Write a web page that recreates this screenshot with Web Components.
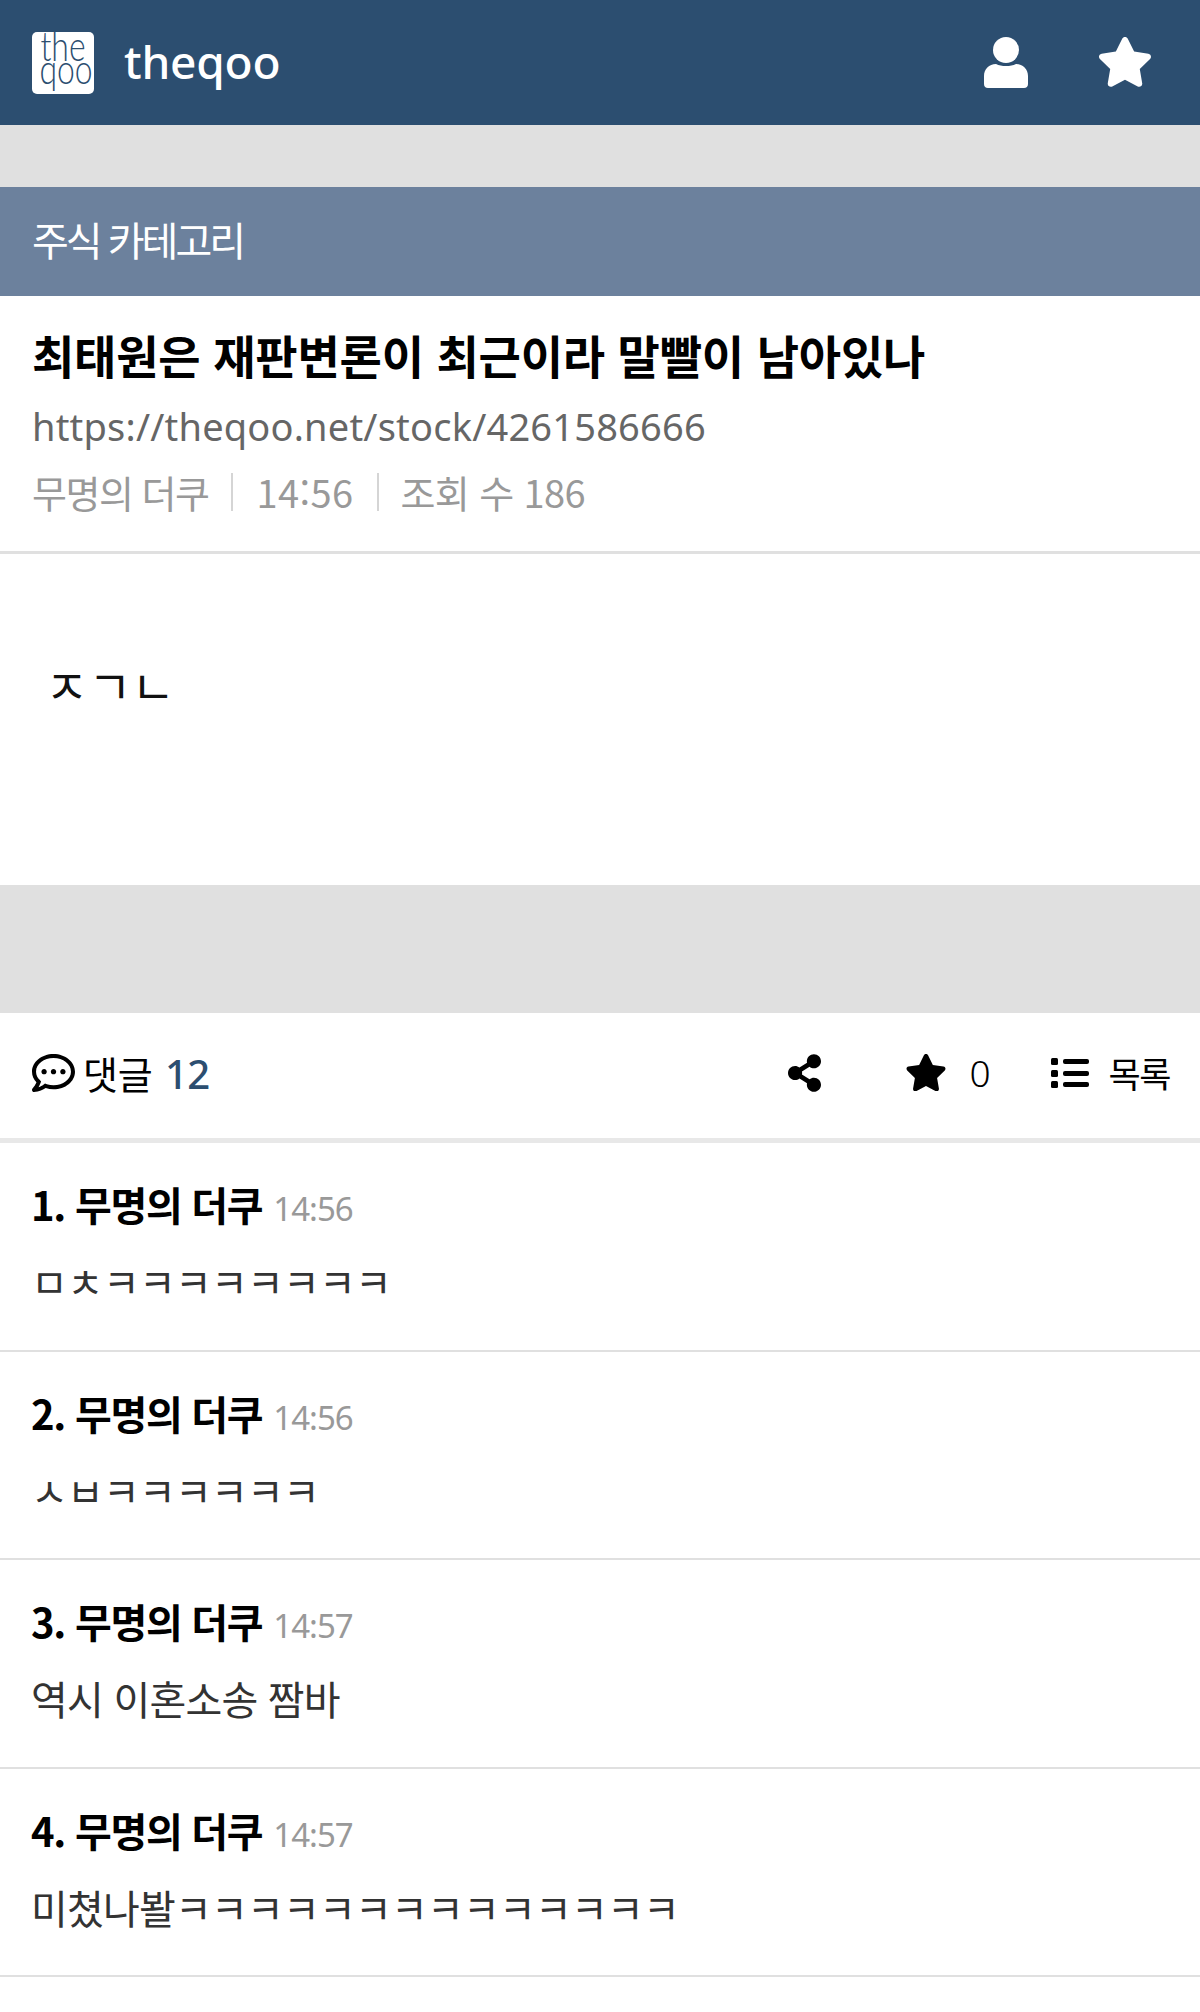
<!DOCTYPE html>
<html lang="ko">
  <head>
    <meta charset="utf-8" />
    <meta name="viewport" content="width=device-width" />
    <title>theqoo</title>
    <style>
      html, body { margin: 0; background: #fff; }
      body { font-family: "Noto Sans CJK KR", "Noto Sans", sans-serif; min-height: 2012px; overflow: hidden; }
    </style>
    <script charset="utf-8">
      const STAR = '<svg viewBox="0 0 576 512" fill="currentColor"><path d="M259.3 17.8L194 150.2 47.9 171.5c-26.2 3.8-36.7 36.1-17.7 54.6l105.7 103-25 145.5c-4.5 26.3 23.2 46 46.4 33.7L288 439.6l130.7 68.7c23.2 12.2 50.9-7.4 46.4-33.7l-25-145.5 105.7-103c19-18.5 8.5-50.8-17.7-54.6L382 150.2 316.7 17.8c-11.7-23.6-45.6-23.9-57.4 0z"/></svg>';

      customElements.define(
        'site-header',
        class extends HTMLElement {
          constructor() {
            super();
            this.attachShadow({mode: 'open'}).innerHTML = `
              <style>
                :host { display: flex; align-items: center; height: 125px; background: #2c4e70; color: #fff; padding: 0 47px 0 32px; }
                .logo { width: 62px; height: 62px; margin-top: 1px; background: #fff; border-radius: 5px; color: #2c4e70; font: 300 42px/23px Lato, sans-serif; text-align: center; box-sizing: border-box; padding-top: 2px; }
                .logo span { display: block; transform: scaleX(.76); white-space: nowrap; }
                .name { margin-left: 30px; flex: 1; font: 500 46px/1 "Noto Sans", sans-serif; position: relative; top: -2px; letter-spacing: -.2px; }
                svg { display: block; }
                .user { width: 44px; height: 51px; }
                .star { width: 56px; height: 51px; margin-left: 69px; }
              </style>
              <div class="logo"><span>the</span><span>qoo</span></div>
              <div class="name">theqoo</div>
              <svg class="user" viewBox="0 0 44 51" fill="#fff"><circle cx="22" cy="13" r="13"/><path d="M0 39c0-7 5-12 12-12 3 1.500 6 2 10 2s7-.5 10-2c7 0 12 5 12 12v8c0 2.500-1.500 4-4 4H4c-2.500 0-4-1.500-4-4z"/></svg>
              <span class="star">${STAR}</span>
            `;
          }
        },
      );

      customElements.define(
        'gray-gap',
        class extends HTMLElement {
          constructor() {
            super();
            this.attachShadow({mode: 'open'}).innerHTML = `
              <style>
                :host { display: block; height: var(--gap, 62px); background: #e0e0e0; }
              </style>
            `;
          }
        },
      );

      customElements.define(
        'category-bar',
        class extends HTMLElement {
          constructor() {
            super();
            this.attachShadow({mode: 'open'}).innerHTML = `
              <style>
                :host { display: block; height: 109px; box-sizing: border-box; background: #6c819d; color: #fff; padding: 0 32px; font-size: 40px; line-height: 105px; letter-spacing: -3px; white-space: nowrap; }
              </style>
              <slot></slot>
            `;
          }
        },
      );

      customElements.define(
        'post-head',
        class extends HTMLElement {
          constructor() {
            super();
            this.attachShadow({mode: 'open'}).innerHTML = `
              <style>
                :host { display: block; height: 258px; box-sizing: border-box; padding: 28px 32px 0; border-bottom: 3px solid #e0e0e0; white-space: nowrap; }
                h1 { margin: 0; font-size: 46px; line-height: 60px; font-weight: 700; color: #000; letter-spacing: -.2px; }
                .url { margin-top: 16px; font: 400 38px/52px "Noto Sans", sans-serif; color: #666; letter-spacing: .2px; }
                .meta { margin-top: 14px; display: flex; align-items: center; font-size: 38px; line-height: 52px; color: #999; letter-spacing: -1.500px; }
                .meta i { width: 2px; height: 38px; margin: 0 23px; background: #d5d5d5; }
                ::slotted([slot=time]) { letter-spacing: .4px; margin-right: 1px; }
                ::slotted([slot=views]) { letter-spacing: -.6px; margin-left: -2px; }
              </style>
              <h1><slot name="title"></slot></h1>
              <div class="url"><slot name="url"></slot></div>
              <div class="meta">
                <slot name="author"></slot><i></i><slot name="time"></slot><i></i><slot name="views"></slot>
              </div>
            `;
          }
        },
      );

      customElements.define(
        'post-body',
        class extends HTMLElement {
          constructor() {
            super();
            this.attachShadow({mode: 'open'}).innerHTML = `
              <style>
                :host { display: block; height: 331px; box-sizing: border-box; padding: 101px 32px 0 45px; color: #111; font-size: 47px; line-height: 58px; }
              </style>
              <slot></slot>
            `;
          }
        },
      );

      customElements.define(
        'comment-bar',
        class extends HTMLElement {
          constructor() {
            super();
            this.attachShadow({mode: 'open'}).innerHTML = `
              <style>
                :host { display: flex; align-items: center; height: 130px; box-sizing: border-box; padding: 0 30px 6px 32px; border-bottom: 5px solid #e8e8e8; font-size: 38px; color: #000; }
                svg, .icon { display: block; }
                .chat { width: 43px; height: 38px; }
                .label { margin-left: 8px; flex: 1; letter-spacing: -.2px; }
                b { font-weight: 500; font-size: 40px; color: #2c4e70; margin-left: 2px; font-family: "Noto Sans", sans-serif; letter-spacing: -.5px; }
                .share { width: 33px; height: 38px; }
                .star { width: 42px; height: 38px; margin-left: 84.500px; }
                .count { margin-left: 22px; font-family: "Noto Sans", sans-serif; font-size: 37px; font-weight: 300; }
                .list { width: 38px; height: 30px; margin-left: 60px; }
                .back { margin-left: 20px; font-size: 35px; letter-spacing: -1.500px; }
              </style>
              <svg class="chat" viewBox="0 32 512 448" preserveAspectRatio="none" fill="currentColor"><path d="M144 208c-17.7 0-32 14.3-32 32s14.3 32 32 32 32-14.3 32-32-14.3-32-32-32zm112 0c-17.7 0-32 14.3-32 32s14.3 32 32 32 32-14.3 32-32-14.3-32-32-32zm112 0c-17.7 0-32 14.3-32 32s14.3 32 32 32 32-14.3 32-32-14.3-32-32-32zM256 32C114.6 32 0 125.1 0 240c0 47.6 19.9 91.2 52.9 126.3C38 405.7 7 439.1 6.5 439.5c-6.6 7-8.4 17.2-4.6 26S14.4 480 24 480c61.5 0 110-25.7 139.1-46.3C192 442.8 223.2 448 256 448c141.4 0 256-93.1 256-208S397.4 32 256 32zm0 368c-26.7 0-53.1-4.1-78.4-12.1l-22.7-7.2-19.5 13.8c-14.3 10.1-33.9 21.4-57.5 29 7.3-12.1 14.4-25.7 19.9-40.2l10.6-28.1-20.6-21.8C69.7 314.1 48 282.2 48 240c0-88.2 93.3-160 208-160s208 71.8 208 160-93.3 160-208 160z"/></svg>
              <div class="label"><slot name="label"></slot> <b><slot name="total"></slot></b></div>
              <svg class="share" viewBox="0 0 448 512" fill="currentColor"><path d="M352 320c-22.608 0-43.387 7.819-59.79 20.895l-102.486-64.054a96.551 96.551 0 0 0 0-41.683l102.486-64.054C308.613 184.181 329.392 192 352 192c53.019 0 96-42.981 96-96S405.019 0 352 0s-96 42.981-96 96c0 7.158.79 14.13 2.276 20.841L155.79 180.895C139.387 167.819 118.608 160 96 160c-53.019 0-96 42.981-96 96s42.981 96 96 96c22.608 0 43.387-7.819 59.79-20.895l102.486 64.054A96.301 96.301 0 0 0 256 416c0 53.019 42.981 96 96 96s96-42.981 96-96-42.981-96-96-96z"/></svg>
              <span class="star icon">${STAR}</span>
              <span class="count"><slot name="stars"></slot></span>
              <svg class="list" viewBox="0 0 38 30" fill="currentColor"><rect y="0" width="7" height="7" rx="1.500"/><rect y="12" width="7" height="7" rx="1.500"/><rect y="23" width="7" height="7" rx="1.500"/><rect x="12" y="1" width="26" height="5" rx="2"/><rect x="12" y="13" width="26" height="5" rx="2"/><rect x="12" y="24" width="26" height="5" rx="2"/></svg>
              <span class="back"><slot name="back"></slot></span>
            `;
          }
        },
      );

      customElements.define(
        'comment-item',
        class extends HTMLElement {
          static get observedAttributes() {
            return ['no', 'author', 'time'];
          }

          constructor() {
            super();
            this.attachShadow({mode: 'open'}).innerHTML = `
              <style>
                :host { display: block; height: 208.500px; box-sizing: border-box; padding: 35px 32px 0 31px; border-bottom: 2px solid #e0e0e0; white-space: nowrap; }
                .head { display: flex; align-items: baseline; height: 52px; line-height: 52px; }
                .who { font-size: 40px; font-weight: 700; color: #000; letter-spacing: -1.300px; }
                .time { margin-left: 11px; font: 400 33px/52px "Noto Sans", sans-serif; color: #999; letter-spacing: -1px; }
                .text { margin-top: 24px; font-size: 40px; line-height: 54px; color: #333; letter-spacing: -.8px; }
              </style>
              <div class="head"><span class="who"></span><span class="time"></span></div>
              <div class="text"><slot></slot></div>
            `;
          }

          attributeChangedCallback() {
            const no = this.getAttribute('no');
            this.shadowRoot.querySelector('.who').textContent = `${no}. ${this.getAttribute('author')}`;
            this.shadowRoot.querySelector('.time').textContent = this.getAttribute('time');
          }
        },
      );
    </script>
  </head>
  <body>
    <site-header></site-header>
    <gray-gap></gray-gap>
    <category-bar>주식 카테고리</category-bar>
    <post-head>
      <span slot="title">최태원은 재판변론이 최근이라 말빨이 남아있나</span>
      <span slot="url">https://theqoo.net/stock/4261586666</span>
      <span slot="author">무명의 더쿠</span>
      <span slot="time">14:56</span>
      <span slot="views">조회 수 186</span>
    </post-head>
    <post-body>ㅈㄱㄴ</post-body>
    <gray-gap style="--gap: 128px"></gray-gap>
    <comment-bar>
      <span slot="label">댓글</span>
      <span slot="total">12</span>
      <span slot="stars">0</span>
      <span slot="back">목록</span>
    </comment-bar>
    <comment-item no="1" author="무명의 더쿠" time="14:56">ㅁㅊㅋㅋㅋㅋㅋㅋㅋㅋ</comment-item>
    <comment-item no="2" author="무명의 더쿠" time="14:56">ㅅㅂㅋㅋㅋㅋㅋㅋ</comment-item>
    <comment-item no="3" author="무명의 더쿠" time="14:57">역시 이혼소송 짬바</comment-item>
    <comment-item no="4" author="무명의 더쿠" time="14:57">미쳤나봘ㅋㅋㅋㅋㅋㅋㅋㅋㅋㅋㅋㅋㅋㅋ</comment-item>
  </body>
</html>
